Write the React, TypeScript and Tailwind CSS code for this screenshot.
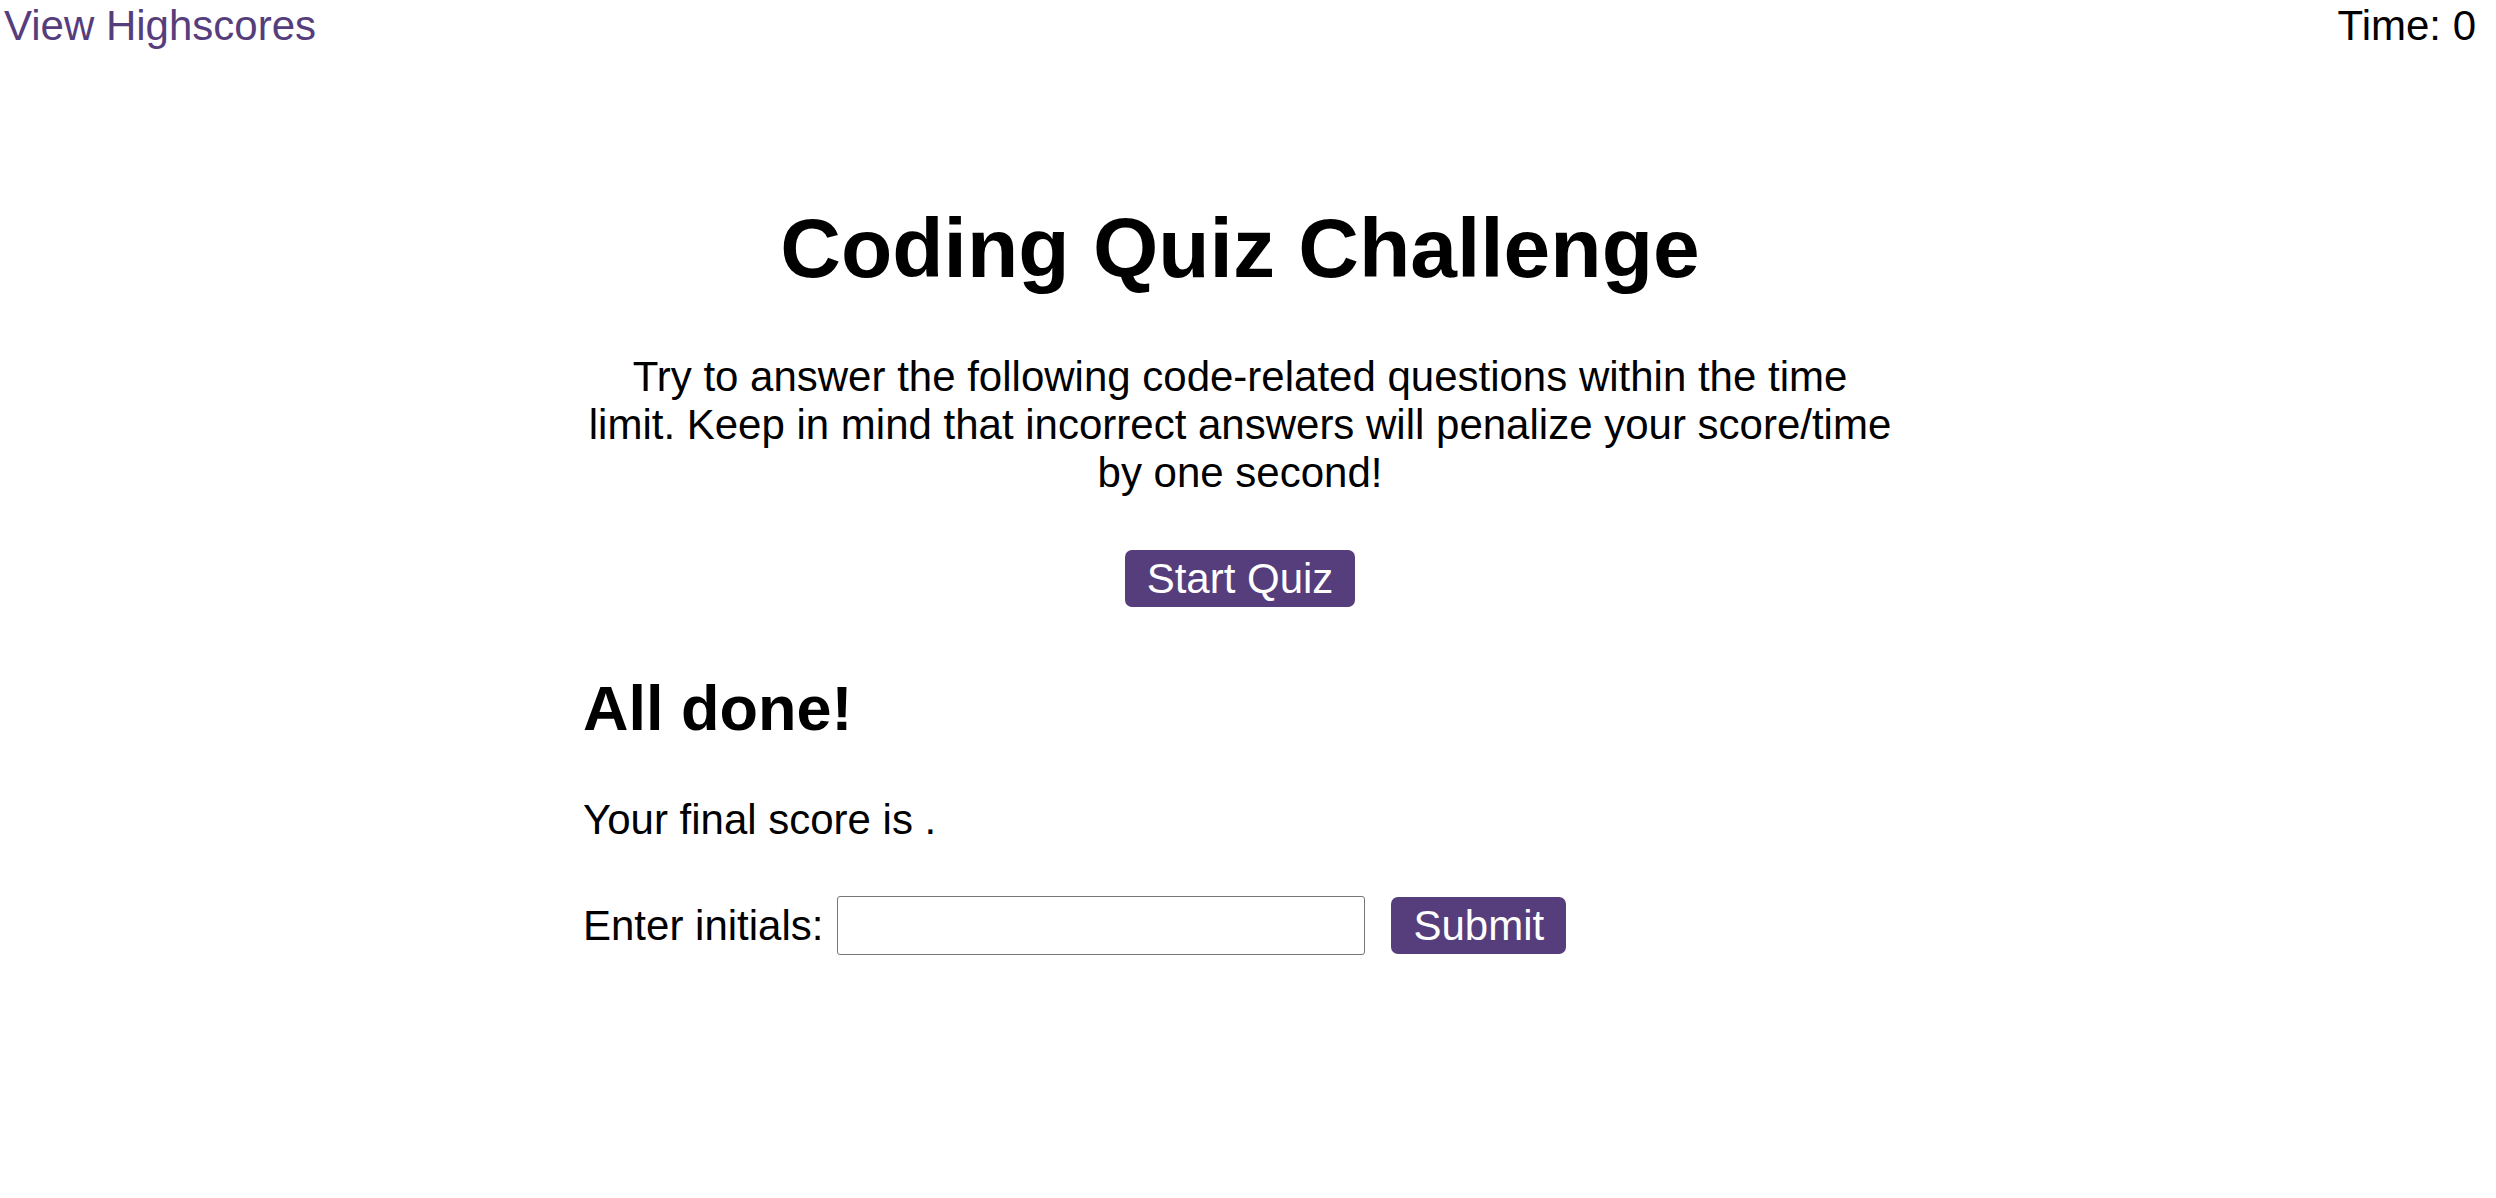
import React from "react";

export default function App() {
  return (
    <div
      className="w-[2480px] min-h-[1198px] bg-white text-black"
      style={{ fontFamily: '"Liberation Sans", Arial, sans-serif' }}
    >
      <header className="flex justify-between px-[4px] pt-[2px] text-[42px] leading-[48px]">
        <a href="#" className="text-[#563d7c]">
          View Highscores
        </a>
        <div>Time: 0</div>
      </header>

      <main className="mx-auto w-[1314px]">
        <section className="flex flex-col items-center text-center">
          <h1 className="mt-[150px] text-[84px] font-bold leading-[96px]">
            Coding Quiz Challenge
          </h1>
          <p className="mt-[57px] whitespace-nowrap text-[42px] leading-[48px]">
            Try to answer the following code-related questions within the time
            <br />
            limit. Keep in mind that incorrect answers will penalize your score/time
            <br />
            by one second!
          </p>
          <button className="mt-[53px] flex h-[57px] items-center rounded-[7px] bg-[#563d7c] px-[22px] text-[42px] leading-[48px] text-white">
            Start Quiz
          </button>
        </section>

        <section>
          <h2 className="mt-[65px] text-[63px] font-bold leading-[72px]">All done!</h2>
          <p className="mt-[52px] text-[42px] leading-[48px]">Your final score is .</p>
          <div className="mt-[52px] flex items-center text-[42px] leading-[48px]">
            <label htmlFor="initials">Enter initials:</label>
            <input
              id="initials"
              type="text"
              className="ml-[14px] h-[59px] w-[528px] rounded-[3px] border border-[#767676] bg-white px-2 text-[42px]"
            />
            <button className="ml-[26px] flex h-[57px] items-center rounded-[7px] bg-[#563d7c] px-[22px] text-[42px] leading-[48px] text-white">
              Submit
            </button>
          </div>
        </section>
      </main>
    </div>
  );
}
